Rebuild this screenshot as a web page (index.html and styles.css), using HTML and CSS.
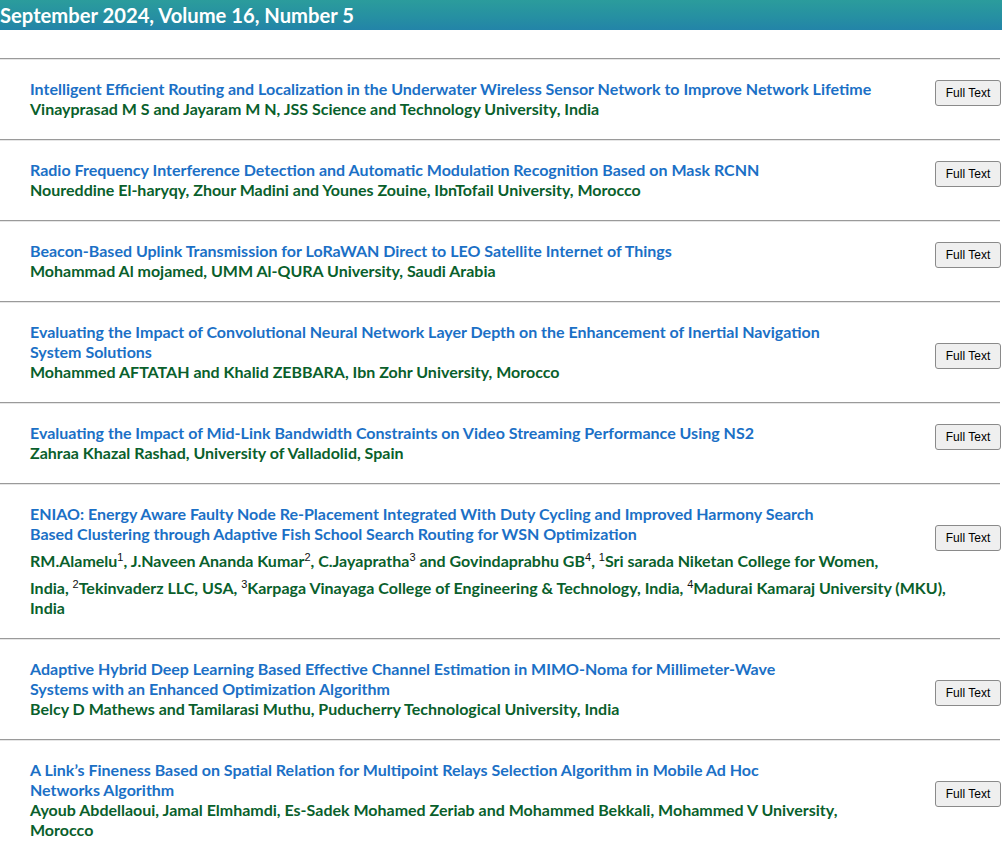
FILE: index.html
```html
<!DOCTYPE html>
<html>
<head>
<meta charset="utf-8">
<title>September 2024, Volume 16, Number 5</title>
<link rel="stylesheet" href="styles.css">
</head>
<body>
<div class="issue-head">September 2024, Volume 16, Number 5</div>
<div class="gap"></div>
<hr class="rule">

<div class="paper">
  <div class="title">Intelligent Efficient Routing and Localization in the Underwater Wireless Sensor Network to Improve Network Lifetime</div>
  <button class="btn">Full Text</button>
  <div class="authors">Vinayprasad M S and Jayaram M N, JSS Science and Technology University, India</div>
</div>
<hr class="rule">

<div class="paper">
  <div class="title">Radio Frequency Interference Detection and Automatic Modulation Recognition Based on Mask RCNN</div>
  <button class="btn">Full Text</button>
  <div class="authors">Noureddine El-haryqy, Zhour Madini and Younes Zouine, IbnTofail University, Morocco</div>
</div>
<hr class="rule">

<div class="paper">
  <div class="title">Beacon-Based Uplink Transmission for LoRaWAN Direct to LEO Satellite Internet of Things</div>
  <button class="btn">Full Text</button>
  <div class="authors">Mohammad Al mojamed, UMM Al-QURA University, Saudi Arabia</div>
</div>
<hr class="rule">

<div class="paper">
  <div class="title">Evaluating the Impact of Convolutional Neural Network Layer Depth on the Enhancement of Inertial Navigation<br>System Solutions</div>
  <button class="btn">Full Text</button>
  <div class="authors">Mohammed AFTATAH and Khalid ZEBBARA, Ibn Zohr University, Morocco</div>
</div>
<hr class="rule">

<div class="paper">
  <div class="title">Evaluating the Impact of Mid-Link Bandwidth Constraints on Video Streaming Performance Using NS2</div>
  <button class="btn">Full Text</button>
  <div class="authors">Zahraa Khazal Rashad, University of Valladolid, Spain</div>
</div>
<hr class="rule">

<div class="paper">
  <div class="title">ENIAO: Energy Aware Faulty Node Re-Placement Integrated With Duty Cycling and Improved Harmony Search<br>Based Clustering through Adaptive Fish School Search Routing for WSN Optimization</div>
  <button class="btn">Full Text</button>
  <div class="authors">RM.Alamelu<sup>1</sup>, J.Naveen Ananda Kumar<sup>2</sup>, C.Jayapratha<sup>3</sup> and Govindaprabhu GB<sup>4</sup>, <sup>1</sup>Sri sarada Niketan College for Women,<br>India, <sup>2</sup>Tekinvaderz LLC, USA, <sup>3</sup>Karpaga Vinayaga College of Engineering &amp; Technology, India, <sup>4</sup>Madurai Kamaraj University (MKU),<br>India</div>
</div>
<hr class="rule">

<div class="paper">
  <div class="title">Adaptive Hybrid Deep Learning Based Effective Channel Estimation in MIMO-Noma for Millimeter-Wave<br>Systems with an Enhanced Optimization Algorithm</div>
  <button class="btn">Full Text</button>
  <div class="authors">Belcy D Mathews and Tamilarasi Muthu, Puducherry Technological University, India</div>
</div>
<hr class="rule">

<div class="paper">
  <div class="title">A Link’s Fineness Based on Spatial Relation for Multipoint Relays Selection Algorithm in Mobile Ad Hoc<br>Networks Algorithm</div>
  <button class="btn">Full Text</button>
  <div class="authors">Ayoub Abdellaoui, Jamal Elmhamdi, Es-Sadek Mohamed Zeriab and Mohammed Bekkali, Mohammed V University,<br>Morocco</div>
</div>
<hr class="rule">
</body>
</html>
```

FILE: styles.css
```css
html, body {
  margin: 0;
  padding: 0;
  background: #ffffff;
}

body {
  font-family: Lato, "Open Sans", sans-serif;
  width: 1002px;
  overflow: hidden;
}

.issue-head {
  height: 30px;
  line-height: 30px;
  background: linear-gradient(to bottom, #2b9c9c 0%, #2690a2 55%, #2384a8 100%);
  color: #ffffff;
  font-weight: 700;
  font-size: 20.2px;
  white-space: nowrap;
}

.gap {
  height: 28px;
}

.rule {
  margin: 0;
  border: 0;
  border-top: 1px solid #9a9a9a;
  border-bottom: 1px solid #e6e6e6;
  height: 0;
  width: 1000px;
}

.paper {
  display: grid;
  grid-template-columns: 1fr auto;
  padding: 19px 1px 20px 30px;
}

.title {
  grid-column: 1;
  grid-row: 1;
  color: #1b70c6;
  font-weight: 700;
  font-size: 16px;
  line-height: 20px;
}

.authors {
  grid-column: 1 / -1;
  grid-row: 2;
  color: #0a5f2c;
  font-weight: 700;
  font-size: 16px;
  line-height: 20px;
}

.authors sup {
  font-family: "Liberation Sans", Arial, sans-serif;
  font-weight: 400;
  color: #111111;
  font-size: 11px;
  line-height: 26px;
  vertical-align: 6px;
}

.btn {
  grid-column: 2;
  grid-row: 1;
  align-self: end;
  margin-bottom: -7px;
  box-sizing: border-box;
  width: 66px;
  height: 26px;
  font-family: "Liberation Sans", Arial, sans-serif;
  font-size: 12px;
  line-height: 16px;
  padding: 0;
  color: #000000;
  background: #efefef;
  border: 1px solid #8a8a8a;
  border-radius: 3px;
}
```
